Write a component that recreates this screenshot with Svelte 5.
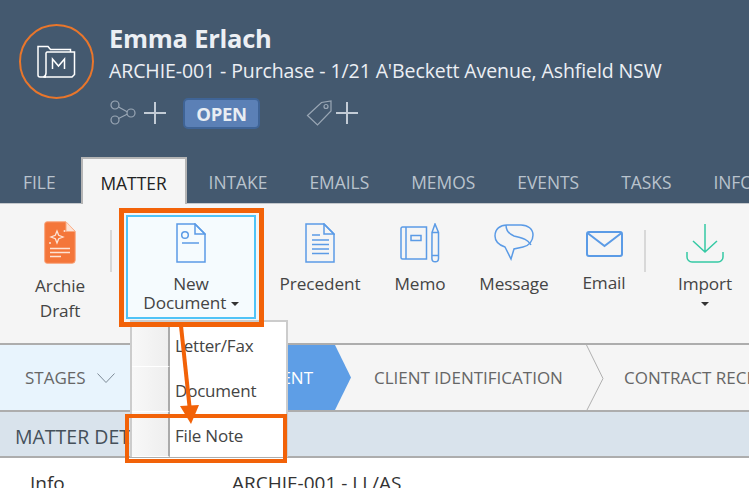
<script>
  const tabs = ['FILE', 'MATTER', 'INTAKE', 'EMAILS', 'MEMOS', 'EVENTS', 'TASKS', 'INFO'];
</script>

<div class="page">
  <header class="head">
    <div class="identity">
      <div class="logo">
        <svg width="40" height="34" viewBox="0 0 40 34" fill="none" stroke="#fff" stroke-width="1.5">
          <path d="M9 32H3a2 2 0 0 1-2-2V1.500h10l2.500 3h20v2.500" />
          <path d="M10 7h27.500v22.500l-2.500 2.500H6.500c2-1 2.500-2 2.500-4V8z" />
          <path d="M15.500 24V14l6 7 6-7v10" />
        </svg>
      </div>
      <div class="titles">
        <h1>Emma Erlach</h1>
        <p>ARCHIE-001 - Purchase - 1/21 A'Beckett Avenue, Ashfield NSW</p>
        <div class="meta">
          <svg class="share" width="28" height="26" viewBox="0 0 28 26" fill="none" stroke="#9aa7b5" stroke-width="1.2">
            <circle cx="5" cy="5" r="4" /><circle cx="5" cy="20" r="4" /><circle cx="21" cy="13" r="4" />
            <path d="M8.600 7l8.500 4.800M8.500 18.500l8.600-4.200" />
          </svg>
          <svg class="plus" width="24" height="24" viewBox="0 0 24 24" stroke="#c3ccd6" stroke-width="2"><path d="M1 12h22M12 1v22" /></svg>
          <span class="badge">OPEN</span>
          <svg class="tag" width="26" height="26" viewBox="0 0 26 26" fill="none" stroke="#9aa7b5" stroke-width="1.200">
            <path d="M1.500 15.500L15.500 2.500 25 1v10L11.500 25z" /><circle cx="20" cy="6.500" r="2" />
          </svg>
          <svg class="plus2" width="24" height="24" viewBox="0 0 24 24" stroke="#c3ccd6" stroke-width="2"><path d="M1 12h22M12 1v22" /></svg>
        </div>
      </div>
    </div>
    <nav class="tabs">
      {#each tabs as t}
        <span class="tab" class:active={t === 'MATTER'}>{t}</span>
      {/each}
    </nav>
  </header>

  <section class="ribbon">
    <div class="tool archie">
      <svg width="32" height="43" viewBox="0 0 32 43">
        <path d="M3 .8h19l9.200 9.500v29a3 3 0 0 1-3 3H3a2.300 2.300 0 0 1-2.300-2.300V3A2.300 2.300 0 0 1 3 .8z" fill="#f4763a" stroke="#f9a67d" />
        <path d="M22 1v9.500h9" fill="#fde3d5" stroke="#f9a67d" />
        <path d="M13 10l1.700 4.300L19 16l-4.300 1.700L13 22l-1.700-4.300L7 16l4.300-1.700z" fill="none" stroke="#fde3d5" stroke-width="1.300" />
        <circle cx="20.500" cy="10" r="1" fill="#fde3d5" /><circle cx="6" cy="22" r="1" fill="#fde3d5" />
        <path d="M6 27.500h20M6 31.500h20M6 35.500h11" stroke="#fde3d5" stroke-width="1.500" />
      </svg>
      <span class="label two">Archie<br />Draft</span>
    </div>
    <i class="sep"></i>
    <div class="tool newdoc">
      <svg width="30" height="40" viewBox="0 0 30 40" fill="none" stroke="#5b9be6" stroke-width="1.500">
        <path d="M19 1H1v38h28V11z" /><path d="M19 1l10 10H19z" />
        <circle cx="9" cy="12" r="3.300" /><path d="M6 20h17" />
      </svg>
      <span class="label">New<br />Document <b class="caret"></b></span>
    </div>
    <div class="tool prec">
      <svg width="30" height="40" viewBox="0 0 30 40" fill="none" stroke="#5b9be6" stroke-width="1.500">
        <path d="M19 1H1v38h28V11z" /><path d="M19 1l10 10H19z" />
        <path d="M7 12h8M7 17h17M7 21.500h17M7 26h17M7 30.500h17" />
      </svg>
      <span class="label">Precedent</span>
    </div>
    <div class="tool memo">
      <svg width="40" height="40" viewBox="0 0 40 40" fill="none" stroke="#5b9be6" stroke-width="1.500">
        <path d="M2.500 4h24v32h-24A1.500 1.500 0 0 1 1 34.500v-29A1.500 1.500 0 0 1 2.500 4zM6 4v32" />
        <path d="M11 12.500h10v5H11z" />
        <path d="M32 9.500L35 1l3.500 8.500v26a3.300 3.300 0 0 1-6.600 0zM32 9.500h6.500M32 32.500h6.500" />
      </svg>
      <span class="label">Memo</span>
    </div>
    <div class="tool msg">
      <svg width="40" height="37" viewBox="0 0 40 37" fill="none" stroke="#5b9be6" stroke-width="1.500">
        <path d="M13 1h14c7 0 12 4 12 10 0 6-4 11-10 12l-9 2-3 10-6-12C5 21 1 17 1 12 1 5 6 1 13 1z" />
        <path d="M12 1c0 6 3 9 8 11 8 2 14 3 17 9" />
      </svg>
      <span class="label">Message</span>
    </div>
    <div class="tool mail">
      <svg width="37" height="26" viewBox="0 0 37 26" fill="none" stroke="#5b9be6" stroke-width="2">
        <rect x="1" y="1" width="35" height="24" rx="2" /><path d="M1.500 2L18.500 15 35.500 2" />
      </svg>
      <span class="label">Email</span>
    </div>
    <i class="sep last"></i>
    <div class="tool imp">
      <svg width="38" height="39" viewBox="0 0 38 39" fill="none" stroke="#35c9a4" stroke-width="1.500">
        <path d="M19 0v28M7 17l12 11 12-11" />
        <path d="M1 28v5a5 5 0 0 0 5 5h26a5 5 0 0 0 5-5v-5" />
      </svg>
      <span class="label">Import<br /><b class="caret"></b></span>
    </div>
  </section>

  <section class="stages">
    <div class="stage-toggle">
      <span>STAGES</span>
      <svg width="18" height="10" viewBox="0 0 18 10" fill="none" stroke="#7d8a96"><path d="M.5.500L9 9.500 17.500.500" /></svg>
    </div>
    <div class="current"><span>ENGAGEMENT</span></div>
    <div class="step first-step"><span>CLIENT IDENTIFICATION</span>
      <svg class="chev" width="18" height="66" viewBox="0 0 18 66" fill="none" stroke="#b0b0b0"><path d="M.5 0L17 33.500.5 66" /></svg>
    </div>
    <div class="step"><span>CONTRACT RECEIVED</span></div>
  </section>

  <section class="details">MATTER DETAILS</section>

  <div class="row"><span class="key">Info</span><span>ARCHIE-001 - LL/AS</span></div>

  <div class="menu">
    <div class="item">Letter/Fax</div>
    <div class="item">Document</div>
    <div class="item">File Note</div>
  </div>

  <i class="mark top"></i>
  <i class="mark bottom"></i>
  <svg class="arrow" width="30" height="110" viewBox="0 0 30 110">
    <path d="M5 0l9 85" stroke="#f26208" stroke-width="4" fill="none" />
    <path d="M4 80l19-1-8 19z" fill="#f26208" />
  </svg>
</div>

<style>
  :global(body) { margin: 0; background: #fff; }
  .page {
    position: relative;
    width: 749px;
    height: 488px;
    overflow: hidden;
    font-family: "Open Sans", "Noto Sans", sans-serif;
    color: #444;
  }
  .head { background: #44596f; height: 204px; box-sizing: border-box; display: flex; flex-direction: column; border-bottom: 1px solid #c4c8cc; }
  .identity { display: flex; padding: 24px 0 0 19px; height: 157px; box-sizing: border-box; flex: none; }
  .logo {
    width: 75px; height: 75px; box-sizing: border-box;
    border: 2px solid #e9762b; border-radius: 50%;
    display: flex; align-items: center; justify-content: center;
    flex: none;
  }
  .titles { margin-left: 16px; white-space: nowrap; }
  h1 { margin: -1px 0 0 -1px; font-size: 25.500px; line-height: 30px; font-weight: 700; color: #eceff4; letter-spacing: -.25px; }
  p { margin: 4px 0 0 -1px; font-size: 19.500px; line-height: 27px; color: #eceff4; letter-spacing: -.1px; }
  .meta { display: flex; align-items: center; height: 32px; margin-top: 13px; }
  .plus { margin-left: 5px; }
  .badge {
    margin-left: 16px; width: 77px; height: 31px; box-sizing: border-box;
    background: #5b80b6; border: 2px solid #3f6496; border-radius: 5px;
    color: #e8edf3; font-weight: 700; font-size: 18.500px; letter-spacing: -.3px;
    display: flex; align-items: center; justify-content: center;
  }
  .tag { margin-left: 46px; }
  .plus2 { margin-left: 3px; }
  .tabs { display: flex; height: 46px; padding-left: 2px; align-items: stretch; flex: none; }
  .tab {
    padding: 0 21px; font-size: 17.400px; line-height: 50px; color: #b9c3cd; white-space: nowrap;
    flex: none;
  }
  .tab.active {
    background: #f5f5f5; color: #222; border: 2px solid #b5b5b5; border-bottom: 0;
    width: 106px; box-sizing: border-box; padding: 0; text-align: center; margin: 0 1px -1px 4px; line-height: 48px;
  }
  .ribbon {
    height: 141px; background: #f5f5f5; box-sizing: border-box;
    display: flex; align-items: flex-start; border-bottom: 2px solid #adadad; padding-left: 14px;
  }
  .tool { display: flex; flex-direction: column; align-items: center; flex: none; padding-top: 19px; }
  .tool svg { flex: none; }
  .label { font-size: 17.200px; line-height: 19px; color: #444; text-align: center; margin-top: 11px; letter-spacing: -.1px; white-space: nowrap; }
  .two { line-height: 25px; margin-top: 9px; }
  .caret { display: inline-block; width: 0; height: 0; border: 4px solid transparent; border-top: 4px solid #333; border-bottom: 0; vertical-align: 3px; }
  .sep { width: 2px; height: 42px; background: #d8d8d8; margin: 26px 0 0 4px; flex: none; }
  .archie { width: 92px; padding-top: 17px; }
  .newdoc {
    width: 130px; height: 104px; box-sizing: border-box; margin: 11px 0 0 14px; padding-top: 6px;
    background: #f5fbfe; border: 2px solid #4fc3f7;
  }
  .prec { width: 100px; margin-left: 14px; }
  .memo { width: 80px; margin-left: 10px; }
  .msg { width: 90px; margin-left: 9px; padding-top: 20px; }
  .msg .label { margin-top: 13px; }
  .mail { width: 70px; margin-left: 10px; padding-top: 27px; }
  .mail .label { margin-top: 16px; }
  .last { margin-left: 5px; }
  .imp { width: 80px; margin-left: 19px; padding-top: 20px; }

  .stages {
    height: 67px; box-sizing: border-box; background: #f5f5f5; border-bottom: 2px solid #adadad;
    display: flex; align-items: stretch; font-size: 17px; color: #666; white-space: nowrap; overflow: hidden;
  }
  .stage-toggle { width: 130px; flex: none; background: #e8f4fd; display: flex; align-items: center; gap: 11px; padding-left: 25px; box-sizing: border-box; }
  .current {
    width: 221px; flex: none; box-sizing: border-box; background: #5e9ee6; color: #fff;
    display: flex; align-items: center; justify-content: flex-end; padding-right: 38px;
    clip-path: polygon(0 0, 205px 0, 100% 50%, 205px 100%, 0 100%);
  }
  .step { position: relative; display: flex; align-items: center; flex: none; padding-left: 23px; }
  .first-step { width: 250px; box-sizing: border-box; }
  .chev { position: absolute; left: 235px; top: 0; }
  .details {
    height: 46px; box-sizing: border-box; background: #d9e3ec; border-bottom: 2px solid #adadad;
    padding-left: 15px; font-size: 19.500px; line-height: 49px; color: #45505a;
  }
  .row { display: flex; padding: 13px 0 0 30px; font-size: 19px; line-height: 24px; color: #333; }
  .key { width: 202px; flex: none; }

  .menu {
    position: absolute; left: 130px; top: 320px; width: 158px; box-sizing: border-box;
    background: #fff; border: 2px solid #ccc; border-bottom: 0; font-size: 17px; color: #444; letter-spacing: -.2px;
  }
  .item {
    height: 45px; line-height: 48px; padding-left: 43px; white-space: nowrap; position: relative;
  }
  .item::before {
    content: ""; position: absolute; left: 0; top: 0; bottom: 0; width: 36px;
    background: linear-gradient(90deg, #f8f8f8, #eeeeee); border-right: 2px solid #aaa; border-bottom: 1px solid #fff;
  }
  .mark { position: absolute; box-sizing: border-box; border-style: solid; border-color: #f26208; }
  .top { left: 119px; top: 208px; width: 145px; height: 119px; border-width: 5px; }
  .bottom { left: 125px; top: 414px; width: 162px; height: 49px; border-width: 4px; }
  .arrow { position: absolute; left: 176px; top: 326px; }
</style>
